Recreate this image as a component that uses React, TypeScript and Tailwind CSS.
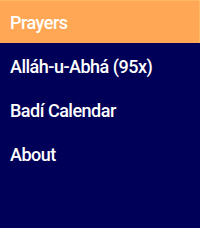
import React from "react";

const items = ["Alláh-u-Abhá (95x)", "Badí Calendar", "About"];

export default function App() {
  return (
    <div
      className="w-[200px] h-[228px] bg-[#000058] text-white overflow-hidden font-medium"
      style={{ fontFamily: '"Roboto", "DejaVu Sans", sans-serif' }}
    >
      <div className="h-[43px] bg-[#ffa755] border-t border-r border-[#ffb866] flex items-center px-[10px] pt-[1px] text-[18px] leading-none tracking-[-0.5px]">
        Prayers
      </div>
      {items.map((t) => (
        <div key={t} className="h-[44px] flex items-center px-[10px] pt-[3px] text-[18px] leading-none tracking-[-0.5px]">
          {t}
        </div>
      ))}
    </div>
  );
}
